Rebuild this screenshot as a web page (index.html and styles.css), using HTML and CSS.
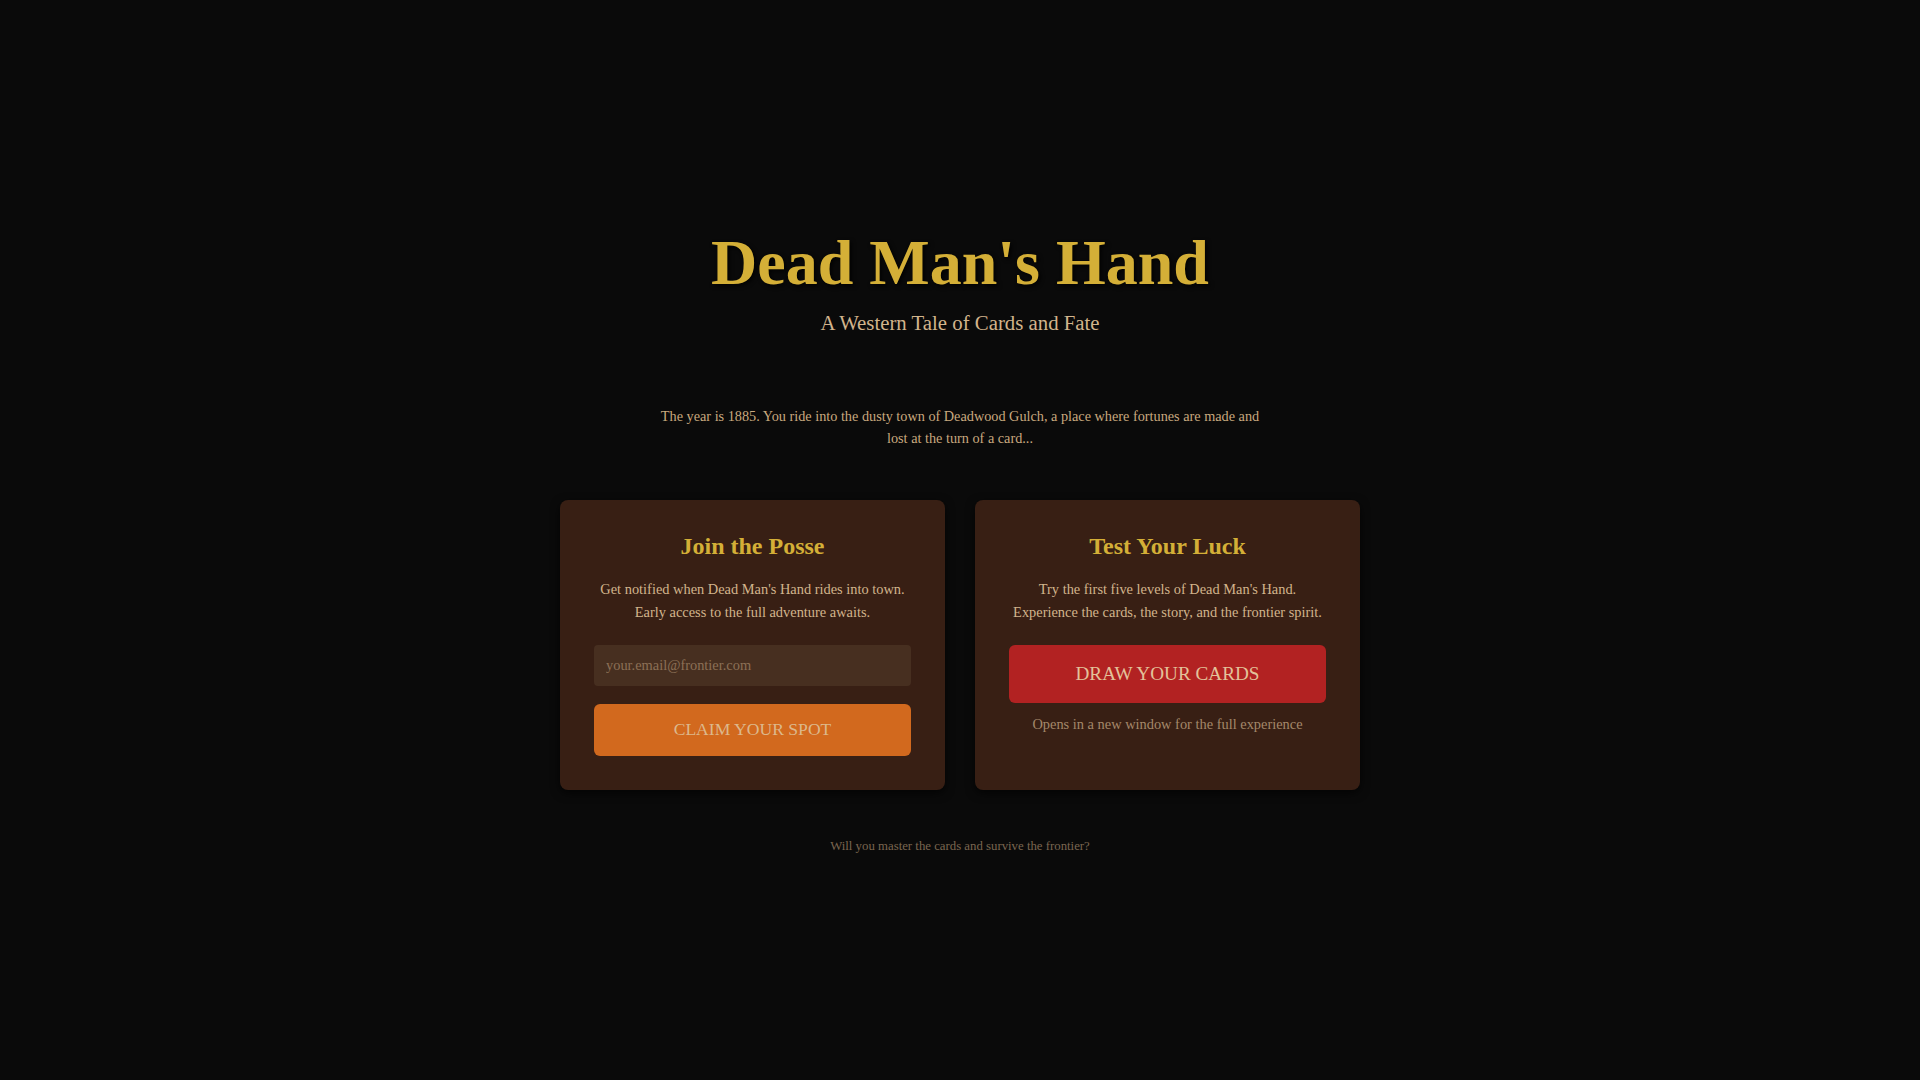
FILE: index.html
```html
<!DOCTYPE html>
<html lang="en">
<head>
<meta charset="utf-8">
<title>Dead Man's Hand</title>
<link rel="stylesheet" href="styles.css">
</head>
<body>
<main class="page">
  <header class="hero">
    <h1 class="title">Dead Man's Hand</h1>
    <p class="subtitle">A Western Tale of Cards and Fate</p>
  </header>
  <p class="intro">The year is 1885. You ride into the dusty town of Deadwood Gulch, a place where fortunes are made and lost at the turn of a card...</p>
  <section class="cards">
    <div class="card">
      <h2 class="card-title">Join the Posse</h2>
      <p class="card-text">Get notified when Dead Man's Hand rides into town. Early access to the full adventure awaits.</p>
      <form class="signup">
        <input class="email" type="email" placeholder="your.email@frontier.com">
        <button class="btn btn-claim" type="button">CLAIM YOUR SPOT</button>
      </form>
    </div>
    <div class="card">
      <h2 class="card-title">Test Your Luck</h2>
      <p class="card-text">Try the first five levels of Dead Man's Hand. Experience the cards, the story, and the frontier spirit.</p>
      <button class="btn btn-draw" type="button">DRAW YOUR CARDS</button>
      <p class="note">Opens in a new window for the full experience</p>
    </div>
  </section>
  <p class="footer">Will you master the cards and survive the frontier?</p>
</main>
</body>
</html>
```
FILE: styles.css
```css
* { box-sizing: border-box; }

html, body {
  margin: 0;
  padding: 0;
}

body {
  background: #0a0a0a;
  color: #d2b48c;
  font-family: "Liberation Serif", "Times New Roman", serif;
  line-height: 1.6;
  min-height: 100vh;
  display: flex;
  align-items: center;
  justify-content: center;
}

.page {
  width: 800px;
  display: flex;
  flex-direction: column;
  align-items: center;
  text-align: center;
}

.hero {
  padding-top: 1.5px;
  margin-bottom: 65px;
}

.title {
  margin: 0 0 4.5px;
  font-size: 64px;
  line-height: 1.2;
  font-weight: bold;
  color: #d4af37;
  text-shadow: 2px 2px 4px rgba(0, 0, 0, 0.85);
}

.subtitle {
  margin: 0;
  font-size: 20.8px;
  color: #d2b48c;
}

.intro {
  margin: 0 0 50px;
  max-width: 610px;
  font-size: 14.25px;
  color: #c9a97f;
}

.cards {
  width: 100%;
  display: grid;
  grid-template-columns: 1fr 1fr;
  gap: 30px;
}

.card {
  background: #381f14;
  border-radius: 8px;
  padding: 31.5px 34px 34.5px;
  box-shadow: 0 3px 10px rgba(0, 0, 0, 0.7);
  display: flex;
  flex-direction: column;
}

.card-title {
  margin: 0 0 18px;
  font-size: 24px;
  line-height: 1.2;
  font-weight: bold;
  color: #d4af37;
}

.card-text {
  margin: 0 0 20px;
  font-size: 14.4px;
  color: #d2b48c;
}

.signup {
  display: flex;
  flex-direction: column;
  gap: 18px;
  margin: 0;
}

.email {
  width: 100%;
  padding: 12px;
  border: none;
  border-radius: 4px;
  background: #472f20;
  color: #d2b48c;
  font-family: "Liberation Serif", "Times New Roman", serif;
  font-size: 14.4px;
  outline: none;
}

.email::placeholder {
  color: #8c7056;
}

.btn {
  width: 100%;
  border: none;
  border-radius: 6px;
  font-family: "Liberation Serif", "Times New Roman", serif;
  color: #dcb88c;
  line-height: normal;
  cursor: pointer;
}

.btn-claim {
  background: #d2691e;
  padding: 15.5px;
  font-size: 17.6px;
}

.btn-draw {
  background: #b22222;
  padding: 18px;
  font-size: 19.2px;
  color: #e3c29a;
}

.note {
  margin: 10px 0 0;
  font-size: 14.4px;
  color: #a4886a;
}

.footer {
  margin: 46px 0 0;
  font-size: 12.8px;
  color: #7a6650;
}
```
